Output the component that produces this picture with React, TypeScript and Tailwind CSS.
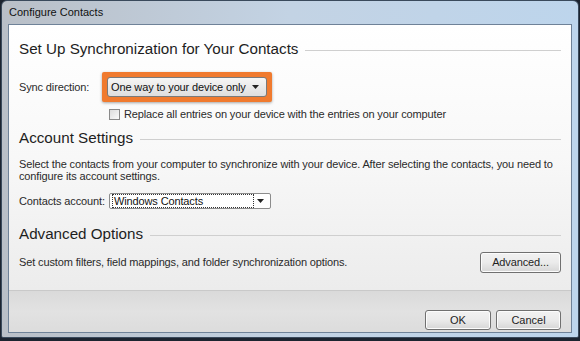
import React from 'react';

const font = { fontFamily: '"Liberation Sans", Arial, sans-serif' };

const SectionTitle: React.FC<{ title: string }> = ({ title }) => (
  <div className="flex items-center gap-[7px]">
    <h2 className="text-[15.2px] leading-[22px] tracking-normal text-[#1e1e1e] whitespace-nowrap">{title}</h2>
    <div className="flex-1 h-px bg-[#cfcfcf] mt-[2px]" />
  </div>
);

const Caret = () => (
  <svg width="7" height="4" viewBox="0 0 7 4" className="shrink-0">
    <path d="M0 0 L7 0 L3.5 4 Z" fill="#222" />
  </svg>
);

const WinButton: React.FC<{ label: string; className?: string }> = ({ label, className }) => (
  <button
    className={
      'h-[20px] rounded-[3px] border border-[#707070] bg-gradient-to-b from-[#f2f2f2] via-[#ebebeb] to-[#d6d6d6] text-[11px] text-[#1e1e1e] shadow-[inset_0_0_0_1px_#fcfcfc] ' +
      (className ?? '')
    }
  >
    {label}
  </button>
);

const App: React.FC = () => {
  return (
    <div className="w-[580px] h-[341px] bg-[#1c2430] overflow-hidden" style={font}>
      <div className="ml-[1px] w-[578px] h-[338px] rounded-t-[6px] rounded-b-[2px] border border-[#3a4a5c] bg-gradient-to-r from-[#b9bfc7] via-[#c3d3e4] to-[#bdd5ec] flex flex-col">
        {/* title bar */}
        <div className="h-[23px] flex items-center pl-[7px] text-[11px] text-[#111]">Configure Contacts</div>

        {/* client area */}
        <div className="mx-[6px] mb-[4px] flex-1 border border-[#6f8298] flex flex-col overflow-hidden">
          <div className="flex-1 bg-gradient-to-b from-[#ffffff] via-[#f8f8f8] to-[#ececec] pl-[10px] pr-[10px] pt-[13px] text-[11px] leading-[13px] tracking-[-0.13px] text-[#2a2a2a]">
            <SectionTitle title="Set Up Synchronization for Your Contacts" />

            <div className="flex items-center mt-[12px]">
              <span className="w-[83px] whitespace-nowrap">Sync direction:</span>
              <div className="p-[5px] bg-[#f07a2e] rounded-[2px] shadow-[0_1px_3px_rgba(0,0,0,0.35)]">
                <div className="w-[160px] h-[20px] flex items-center justify-between pl-[3px] pr-[7px] rounded-[3px] border border-[#7a7a7a] bg-gradient-to-b from-[#f6f6f6] to-[#dedede] text-[11px] text-[#111] whitespace-nowrap">
                  <span>One way to your device only</span>
                  <Caret />
                </div>
              </div>
            </div>

            <div className="flex items-center mt-[6px] ml-[90px] gap-[4px]">
              <span className="w-[11px] h-[11px] border border-[#8a8a8a] bg-gradient-to-br from-[#dcdcdc] to-[#fafafa]" />
              <span className="whitespace-nowrap">Replace all entries on your device with the entries on your computer</span>
            </div>

            <div className="mt-[6px]">
              <SectionTitle title="Account Settings" />
            </div>

            <p className="mt-[9px] leading-[12px] whitespace-nowrap">
              Select the contacts from your computer to synchronize with your device. After selecting the contacts, you need to
              <br />
              configure its account settings.
            </p>

            <div className="flex items-center mt-[11px]">
              <span className="w-[90px] whitespace-nowrap">Contacts account:</span>
              <div className="w-[162px] h-[16px] flex items-center justify-between pl-[2px] pr-[6px] rounded-[2px] border border-[#8c8c8c] bg-white text-[#111]">
                <span className="border border-dotted border-[#333] px-[1px] leading-[12px] w-[142px] whitespace-nowrap">Windows Contacts</span>
                <Caret />
              </div>
            </div>

            <div className="mt-[14px]">
              <SectionTitle title="Advanced Options" />
            </div>

            <div className="flex items-center justify-between mt-[7px]">
              <span className="whitespace-nowrap">Set custom filters, field mappings, and folder synchronization options.</span>
              <WinButton label="Advanced..." className="w-[81px] h-[21px]" />
            </div>
          </div>

          {/* footer */}
          <div className="h-[42px] border-t border-[#c9c9c9] bg-gradient-to-b from-[#dadada] via-[#e2e2e2] to-[#dcdcdc] flex items-end justify-end gap-[5px] pr-[10px] pb-[2px]">
            <WinButton label="OK" className="w-[66px]" />
            <WinButton label="Cancel" className="w-[65px]" />
          </div>
        </div>
      </div>
    </div>
  );
};

export default App;
